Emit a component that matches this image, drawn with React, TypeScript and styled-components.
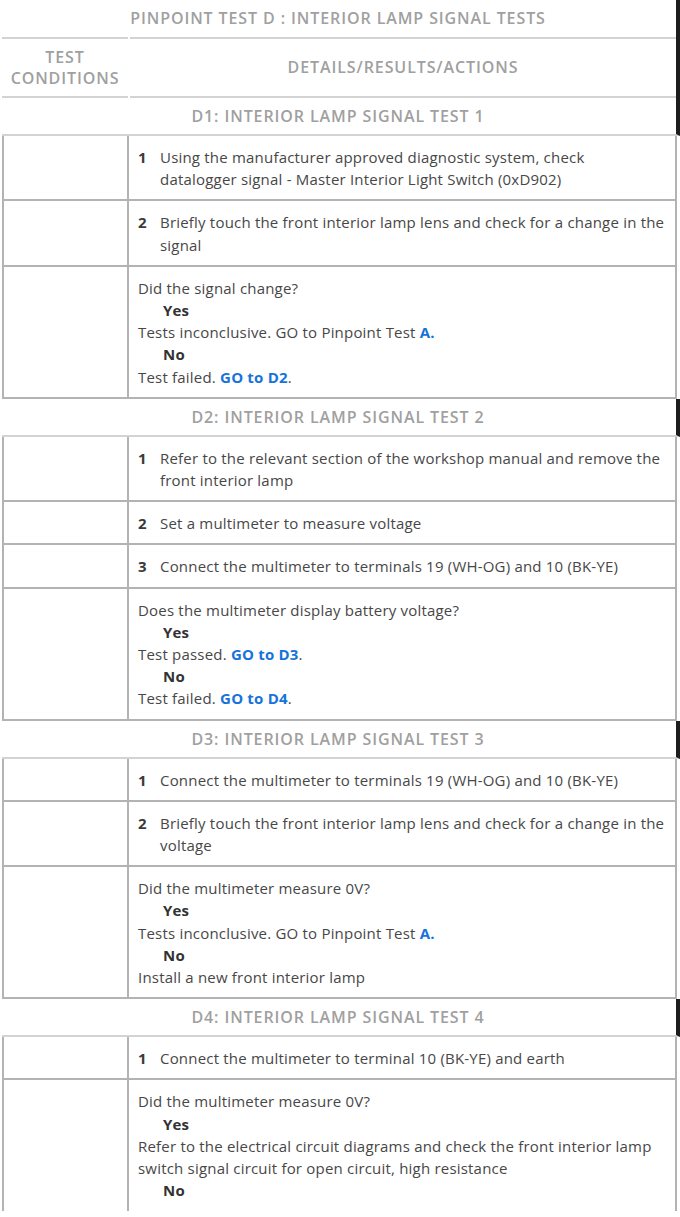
import { ReactNode } from "react";
import styled, { createGlobalStyle } from "styled-components";

const GlobalStyle = createGlobalStyle`
	html, body {
		margin: 0;
		padding: 0;
		background: #ffffff;
	}
	body {
		font-family: "Open Sans", Lato, "Liberation Sans", sans-serif;
		color: #474747;
	}
`;

const Page = styled.div`
	width: 678px;
	margin-left: 2px;
	font-size: 15px;
	line-height: 22.2px;
	letter-spacing: 0.2px;
`;

const TitleRow = styled.div`
	height: 37px;
	display: flex;
	align-items: center;
	justify-content: center;
	padding-right: 2px;
	border-right: 4px solid #1d1d1d;
	color: #a0a0a0;
	font-size: 16px;
	font-weight: 600;
	letter-spacing: 0.9px;
`;

const HeadRow = styled.div`
	display: grid;
	grid-template-columns: 126px 1fr;
	column-gap: 2px;
	border-right: 4px solid #1d1d1d;
`;

const HeadCell = styled.div`
	height: 57px;
	display: flex;
	align-items: center;
	justify-content: center;
	text-align: center;
	border-top: 2px solid #d3d3d3;
	border-bottom: 2px solid #d3d3d3;
	color: #a0a0a0;
	font-size: 16px;
	font-weight: 600;
	line-height: 21px;
	letter-spacing: 0.9px;
`;

const SectionRow = styled.div`
	height: 36px;
	display: flex;
	align-items: center;
	justify-content: center;
	border-bottom: 2px solid #d3d3d3;
	border-right: 4px solid #1d1d1d;
	padding-right: 2px;
	color: #a0a0a0;
	font-size: 16px;
	font-weight: 600;
	letter-spacing: 0.9px;
`;

const BodyRow = styled.div<{ $last?: boolean }>`
	display: grid;
	grid-template-columns: 125px 1fr;
	margin-right: 3px;
	border-left: 2px solid #b3b3b3;
	border-right: 2px solid #b3b3b3;
	border-bottom: ${(p) => (p.$last ? "none" : "2px solid #b3b3b3")};
`;

const ConditionCell = styled.div`
	border-right: 2px solid #b3b3b3;
`;

const DetailCell = styled.div`
	padding: 10px 5px 9px 9px;
`;

const Step = styled.div`
	display: flex;
`;

const StepNo = styled.span`
	flex: 0 0 22px;
	font-weight: 700;
	color: #3a3a3a;
`;

const Line = styled.div``;

const Answer = styled.div`
	padding-left: 25px;
	font-weight: 700;
	color: #333;
`;

const Go = styled.span`
	color: #1673d9;
	font-weight: 700;
`;

type Row = { step?: number; body: ReactNode; last?: boolean };
type Section = { title: string; rows: Row[] };

const Yes = () => <Answer>Yes</Answer>;
const No = () => <Answer>No</Answer>;

const sections: Section[] = [
	{
		title: "D1: INTERIOR LAMP SIGNAL TEST 1",
		rows: [
			{
				step: 1,
				body: (
					<>
						Using the manufacturer approved diagnostic system, check
						<br />
						datalogger signal - Master Interior Light Switch (0xD902)
					</>
				),
			},
			{
				step: 2,
				body: "Briefly touch the front interior lamp lens and check for a change in the signal",
			},
			{
				body: (
					<>
						<Line>Did the signal change?</Line>
						<Yes />
						<Line>
							Tests inconclusive. GO to Pinpoint Test <Go>A.</Go>
						</Line>
						<No />
						<Line>
							Test failed. <Go>GO to D2</Go>.
						</Line>
					</>
				),
			},
		],
	},
	{
		title: "D2: INTERIOR LAMP SIGNAL TEST 2",
		rows: [
			{
				step: 1,
				body: "Refer to the relevant section of the workshop manual and remove the front interior lamp",
			},
			{ step: 2, body: "Set a multimeter to measure voltage" },
			{
				step: 3,
				body: "Connect the multimeter to terminals 19 (WH-OG) and 10 (BK-YE)",
			},
			{
				body: (
					<>
						<Line>Does the multimeter display battery voltage?</Line>
						<Yes />
						<Line>
							Test passed. <Go>GO to D3</Go>.
						</Line>
						<No />
						<Line>
							Test failed. <Go>GO to D4</Go>.
						</Line>
					</>
				),
			},
		],
	},
	{
		title: "D3: INTERIOR LAMP SIGNAL TEST 3",
		rows: [
			{
				step: 1,
				body: "Connect the multimeter to terminals 19 (WH-OG) and 10 (BK-YE)",
			},
			{
				step: 2,
				body: "Briefly touch the front interior lamp lens and check for a change in the voltage",
			},
			{
				body: (
					<>
						<Line>Did the multimeter measure 0V?</Line>
						<Yes />
						<Line>
							Tests inconclusive. GO to Pinpoint Test <Go>A.</Go>
						</Line>
						<No />
						<Line>Install a new front interior lamp</Line>
					</>
				),
			},
		],
	},
	{
		title: "D4: INTERIOR LAMP SIGNAL TEST 4",
		rows: [
			{
				step: 1,
				body: "Connect the multimeter to terminal 10 (BK-YE) and earth",
			},
			{
				last: true,
				body: (
					<>
						<Line>Did the multimeter measure 0V?</Line>
						<Yes />
						<Line>
							Refer to the electrical circuit diagrams and check the front interior lamp
							switch signal circuit for open circuit, high resistance
						</Line>
						<No />
					</>
				),
			},
		],
	},
];

const App = () => {
	return (
		<Page>
			<GlobalStyle />
			<TitleRow>PINPOINT TEST D : INTERIOR LAMP SIGNAL TESTS</TitleRow>

			<HeadRow>
				<HeadCell>
					TEST
					<br />
					CONDITIONS
				</HeadCell>
				<HeadCell>DETAILS/RESULTS/ACTIONS</HeadCell>
			</HeadRow>

			{sections.map((section) => (
				<div key={section.title}>
					<SectionRow>{section.title}</SectionRow>
					{section.rows.map((row, i) => (
						<BodyRow key={i} $last={row.last}>
							<ConditionCell />
							<DetailCell>
								{row.step ? (
									<Step>
										<StepNo>{row.step}</StepNo>
										<span>{row.body}</span>
									</Step>
								) : (
									row.body
								)}
							</DetailCell>
						</BodyRow>
					))}
				</div>
			))}
		</Page>
	);
};

export default App;
